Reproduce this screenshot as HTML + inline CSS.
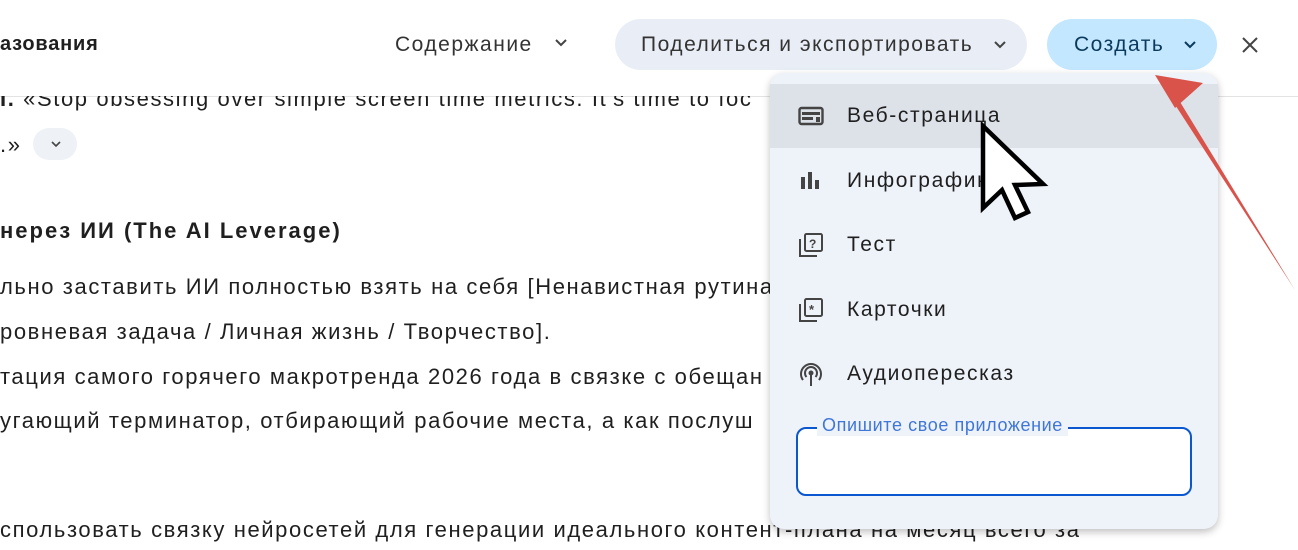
<!DOCTYPE html>
<html><head><meta charset="utf-8"><style>
*{margin:0;padding:0;box-sizing:border-box}
body{width:1298px;height:550px;overflow:hidden;background:#fff;font-family:"Liberation Sans","DejaVu Sans",sans-serif;color:#1f1f1f;position:relative}
.abs{position:absolute;white-space:nowrap}
.t{font-size:22px;letter-spacing:1.6px;color:#1f1f1f}
.pill{position:absolute;border-radius:26px;display:flex;align-items:center;font-size:21px;letter-spacing:1.5px}
.menu{position:absolute;left:770px;top:73px;width:448px;height:456px;background:#eef2f9;border-radius:14px;box-shadow:0 3px 8px rgba(0,0,0,.25)}
.item{position:absolute;left:0;width:448px;height:64px;display:flex;align-items:center;font-size:21px;letter-spacing:1.6px;color:#1f1f1f}
.item svg{position:absolute;left:28px}
.item span{position:absolute;left:77px}
</style></head><body>
<div class="abs" style="left:0;top:33px;font-size:20px;letter-spacing:0.8px;font-weight:bold">азования</div>
<div class="abs" style="left:395px;top:33px;font-size:21px;letter-spacing:1.5px;color:#333">Содержание</div>
<svg class="abs" style="left:554px;top:38px" width="14" height="10"><path d="M2 2l5 5 5-5" stroke="#444" stroke-width="2" fill="none"/></svg>
<div class="pill" style="left:615px;top:19px;width:412px;height:51px;background:#e9eef6;padding-left:26px;color:#333">Поделиться и экспортировать
<svg style="position:absolute;left:378px;top:21px" width="14" height="10"><path d="M2 2l5 5 5-5" stroke="#444" stroke-width="2" fill="none"/></svg></div>
<div class="pill" style="left:1047px;top:19px;width:170px;height:51px;background:#c2e7ff;padding-left:27px;color:#0b3a5c">Создать
<svg style="position:absolute;left:136px;top:21px" width="14" height="10"><path d="M2 2l5 5 5-5" stroke="#0b3a5c" stroke-width="2" fill="none"/></svg></div>
<svg class="abs" style="left:1241px;top:36px" width="18" height="18"><path d="M2 2l14 14M16 2L2 16" stroke="#444" stroke-width="2"/></svg>
<div class="abs" style="left:0;top:96px;width:1298px;height:1px;background:#e3e3e3"></div>

<div class="abs t" style="left:0;top:86px;clip-path:inset(10px 0 0 0)"><b>І.</b> «Stop obsessing over simple screen time metrics. It's time to foc</div>
<div class="abs t" style="left:0;top:132px">.»</div>
<div class="abs" style="left:33px;top:128px;width:44px;height:32px;border-radius:16px;background:#eef1f6"></div>
<svg class="abs" style="left:50px;top:140px" width="12" height="8"><path d="M2 2l4 4 4-4" stroke="#444" stroke-width="1.6" fill="none"/></svg>
<div class="abs t" style="left:0;top:218px;font-weight:bold;letter-spacing:2px">нерез ИИ (The AI Leverage)</div>
<div class="abs t" style="left:0;top:274px">льно заставить ИИ полностью взять на себя [Ненавистная рутина</div>
<div class="abs t" style="left:0;top:319px">ровневая задача / Личная жизнь / Творчество].</div>
<div class="abs t" style="left:0;top:364px">тация самого горячего макротренда 2026 года в связке с обещан</div>
<div class="abs t" style="left:0;top:408px">угающий терминатор, отбирающий рабочие места, а как послуш</div>
<div class="abs t" style="left:0;top:517px">спользовать связку нейросетей для генерации идеального контент-плана на месяц всего за</div>

<div class="menu">
 <div class="item" style="top:11px;background:#dde1e8"><svg width="26" height="20"><rect x="1.5" y="2" width="23" height="16" rx="2" fill="none" stroke="#444" stroke-width="2.4"/><rect x="4" y="6" width="18" height="3" fill="#444"/><rect x="4" y="11" width="11" height="3" fill="#444"/><rect x="18" y="11" width="4" height="5" fill="#444"/></svg><span>Веб-страница</span></div>
 <div class="item" style="top:76px"><svg width="24" height="20"><rect x="3" y="6" width="4" height="12" fill="#444"/><rect x="10" y="1" width="4" height="17" fill="#444"/><rect x="17" y="9" width="4" height="9" fill="#444"/></svg><span>Инфографика</span></div>
 <div class="item" style="top:140px"><svg width="26" height="26"><path d="M2 7v17h17" stroke="#444" stroke-width="2" fill="none"/><rect x="7" y="2" width="17" height="17" rx="1.5" fill="none" stroke="#444" stroke-width="2"/><text x="11" y="16" font-size="12" font-weight="bold" fill="#444" font-family="Liberation Sans">?</text></svg><span>Тест</span></div>
 <div class="item" style="top:205px"><svg width="26" height="26"><path d="M2 7v17h17" stroke="#444" stroke-width="2" fill="none"/><rect x="7" y="2" width="17" height="17" rx="1.5" fill="none" stroke="#444" stroke-width="2"/><text x="11" y="17" font-size="13" font-weight="bold" fill="#444" font-family="Liberation Sans">*</text></svg><span>Карточки</span></div>
 <div class="item" style="top:269px"><svg width="26" height="26"><path d="M5 19a10 10 0 1 1 16 0M8.5 16a6 6 0 1 1 9 0" stroke="#444" stroke-width="2" fill="none"/><circle cx="13" cy="12" r="2.5" fill="#444"/><rect x="12" y="13" width="2" height="12" fill="#444"/></svg><span>Аудиопересказ</span></div>
 <div style="position:absolute;left:26px;top:354px;width:396px;height:69px;border:2.5px solid #0b57d0;border-radius:10px;background:#fff"></div>
 <div class="abs" style="left:47px;top:342px;padding:0 5px;background:#eef2f9;font-size:18px;letter-spacing:0.6px;color:#3f76d8">Опишите свое приложение</div>
</div>

<svg class="abs" style="left:975px;top:122px" width="80" height="100"><path d="M8 4v82l19-18 13 28 13-6-13-27 28-1z" fill="#fff" stroke="#000" stroke-width="4.5" stroke-linejoin="miter"/></svg>
<svg class="abs" style="left:1140px;top:60px" width="158" height="240"><path d="M155 230L32 40l5-3z" fill="#d9534a"/><path d="M15 15l48 8-28 25z" fill="#d9534a"/></svg>
</body></html>
